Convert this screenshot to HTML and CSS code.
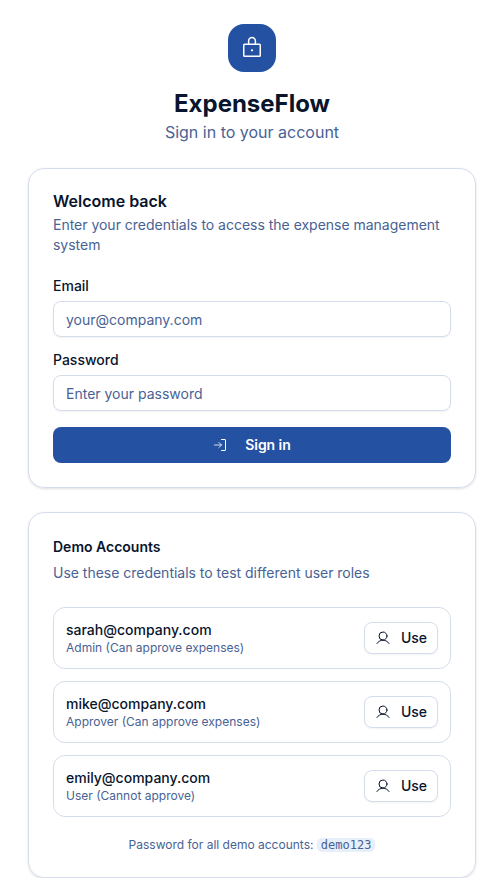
FILE: index.html
```html
<!DOCTYPE html>
<html lang="en">
<head>
<meta charset="utf-8">
<title>ExpenseFlow</title>
<link rel="stylesheet" href="styles.css">
</head>
<body>
<main class="page">
  <header class="brand">
    <div class="logo">
      <svg width="24" height="24" viewBox="0 0 24 24" fill="none" stroke="currentColor" stroke-width="1.5" stroke-linecap="round" stroke-linejoin="round"><rect x="3.75" y="8.25" width="16.5" height="12" rx=".75"/><path d="M8.625 8.25V4.875a3.375 3.375 0 0 1 6.75 0V8.25"/><circle cx="12" cy="14.25" r="1.125" fill="currentColor" stroke="none"/></svg>
    </div>
    <h1>ExpenseFlow</h1>
    <p>Sign in to your account</p>
  </header>
  <section class="card login">
    <h2>Welcome back</h2>
    <p class="desc">Enter your credentials to access the expense management system</p>
    <form>
      <label for="email">Email</label>
      <input id="email" type="email" placeholder="your@company.com">
      <label for="password">Password</label>
      <input id="password" type="password" placeholder="Enter your password">
      <button class="primary" type="button">
        <svg width="16" height="16" viewBox="0 0 24 24" fill="none" stroke="currentColor" stroke-width="1.5" stroke-linecap="round" stroke-linejoin="round"><path opacity=".8" d="M2.250 12h10.500M8.810 15.940 12.750 12 8.810 8.060"/><path d="M12.750 3.750H18a.75.75 0 0 1 .75.75v15a.75.75 0 0 1-.75.75h-5.250"/></svg>
        <span>Sign in</span>
      </button>
    </form>
  </section>
  <section class="card demo">
    <h3>Demo Accounts</h3>
    <p class="desc">Use these credentials to test different user roles</p>
    <ul class="accounts">
      <li><div><strong>sarah@company.com</strong><small>Admin (Can approve expenses)</small></div><button class="use" type="button"><svg width="16" height="16" viewBox="0 0 24 24" fill="none" stroke="currentColor" stroke-width="1.5" stroke-linecap="round"><circle cx="12" cy="9" r="6"/><path d="M2.906 20.25a10.502 10.502 0 0 1 18.188 0"/></svg><span>Use</span></button></li>
      <li><div><strong>mike@company.com</strong><small>Approver (Can approve expenses)</small></div><button class="use" type="button"><svg width="16" height="16" viewBox="0 0 24 24" fill="none" stroke="currentColor" stroke-width="1.5" stroke-linecap="round"><circle cx="12" cy="9" r="6"/><path d="M2.906 20.25a10.502 10.502 0 0 1 18.188 0"/></svg><span>Use</span></button></li>
      <li><div><strong>emily@company.com</strong><small>User (Cannot approve)</small></div><button class="use" type="button"><svg width="16" height="16" viewBox="0 0 24 24" fill="none" stroke="currentColor" stroke-width="1.5" stroke-linecap="round"><circle cx="12" cy="9" r="6"/><path d="M2.906 20.25a10.502 10.502 0 0 1 18.188 0"/></svg><span>Use</span></button></li>
    </ul>
    <p class="note">Password for all demo accounts: <code>demo123</code></p>
  </section>
</main>
</body>
</html>
```
FILE: styles.css
```css
* { box-sizing: border-box; margin: 0; padding: 0; }
body { background: #fff; color: #08152d; font: 14px/20px Inter, sans-serif; overflow: hidden; }
svg { display: block; flex: none; }
.page { width: 448px; margin: 24px 27px 0 28px; }
.brand { display: flex; flex-direction: column; align-items: center; text-align: center; }
.logo { width: 48px; height: 48px; border-radius: 16px; background: #2551a3; color: #fff; display: grid; place-items: center; margin-bottom: 16px; }
h1 { font-size: 24px; line-height: 32px; font-weight: 700; }
.brand p { font-size: 16px; line-height: 24px; color: #486294; }
.card { border: 1px solid #d5dded; border-radius: 16px; padding: 24px; box-shadow: 0 1px 3px rgba(0,0,0,.1), 0 1px 2px -1px rgba(0,0,0,.1); }
.login { height: 320px; margin-top: 24px; }
h2 { font-size: 16px; line-height: 16px; font-weight: 600; }
.desc { color: #486294; letter-spacing: -.015px; }
.login .desc { margin-top: 6px; }
form { margin-top: 24px; }
label { display: block; font-weight: 500; line-height: 14px; margin-bottom: 8px; }
input { display: block; width: 100%; height: 36px; border: 1px solid #d5dded; border-radius: 8px; padding: 0 12px; font: inherit; box-shadow: 0 1px 2px rgba(0,0,0,.05); margin-bottom: 16px; }
input::placeholder { color: #486294; opacity: 1; }
button { display: flex; align-items: center; justify-content: center; font: 500 14px/20px Inter, sans-serif; }
.primary { width: 100%; height: 36px; gap: 16px; border: 0; border-radius: 8px; background: #2551a3; color: #fff; font-weight: 600; letter-spacing: -.04px; }
.demo { height: 366px; margin-top: 24px; }
h3 { font-size: 14px; line-height: 20px; font-weight: 600; }
.demo .desc { margin-top: 6px; }
.accounts { list-style: none; display: grid; gap: 12px; margin-top: 24px; }
.accounts li { height: 62px; border: 1px solid #d5dded; border-radius: 12px; padding: 0 12px; display: flex; align-items: center; justify-content: space-between; }
strong, small { display: block; }
strong { font-weight: 500; line-height: 20px; }
small { font-size: 12px; line-height: 16px; color: #486294; }
.use { width: 74px; height: 32px; gap: 10px; border: 1px solid #d5dded; border-radius: 8px; background: #fff; color: #08152d; box-shadow: 0 1px 2px rgba(0,0,0,.05); }
.note { font-size: 12px; line-height: 16px; color: #486294; text-align: center; margin-top: 20px; }
code { font: 12px/16px "DejaVu Sans Mono", monospace; background: #e7effb; border-radius: 5px; padding: 0 4px; }
```
